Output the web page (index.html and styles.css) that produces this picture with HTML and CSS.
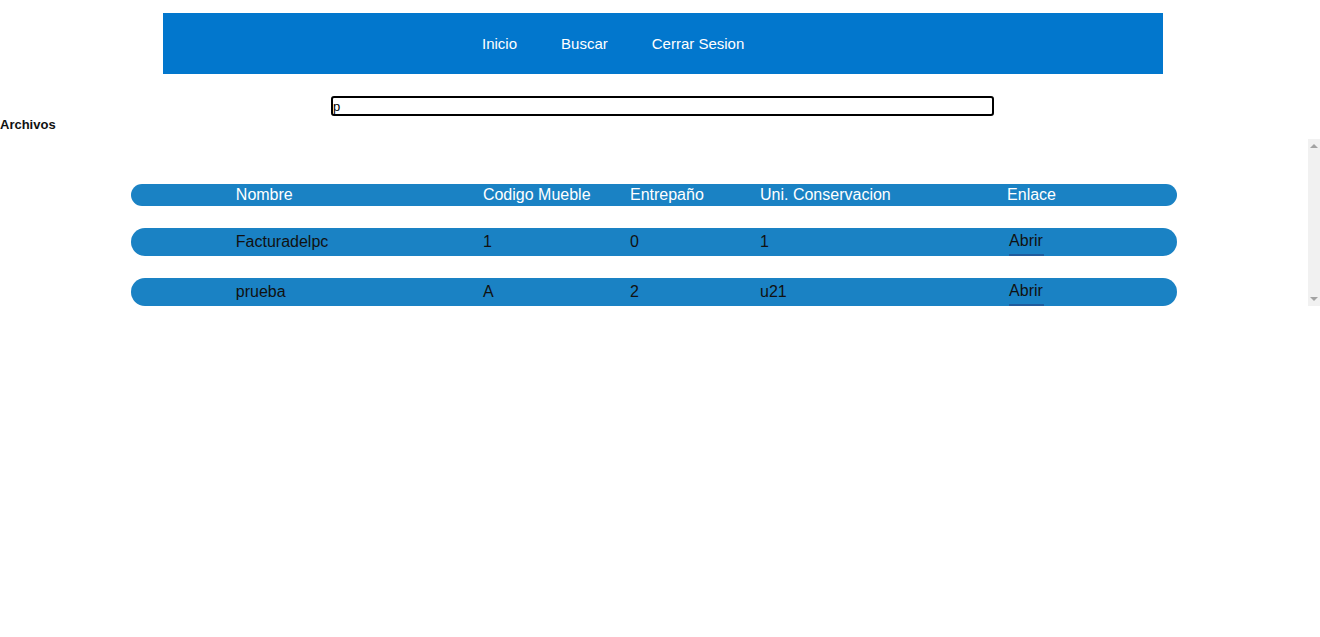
FILE: index.html
```html
<!DOCTYPE html>
<html lang="es">
<head>
<meta charset="utf-8">
<title>Archivos</title>
<link rel="stylesheet" href="styles.css">
</head>
<body>
<nav class="topnav">
  <a class="navlink" href="#">Inicio</a>
  <a class="navlink" href="#">Buscar</a>
  <a class="navlink" href="#">Cerrar Sesion</a>
</nav>
<div class="searchrow">
  <input class="search" type="text" value="p">
</div>
<h4 class="title">Archivos</h4>
<div class="scrollbox">
  <div class="scrollcontent">
    <table class="files">
      <colgroup>
        <col class="c0"><col class="c1"><col class="c2"><col class="c3"><col class="c4"><col class="c5">
      </colgroup>
      <thead>
        <tr><th></th><th>Nombre</th><th>Codigo Mueble</th><th>Entrepaño</th><th>Uni. Conservacion</th><th>Enlace</th></tr>
      </thead>
      <tbody>
        <tr><td></td><td>Facturadelpc</td><td>1</td><td>0</td><td>1</td><td><a class="abrir" href="#">Abrir</a></td></tr>
        <tr><td></td><td>prueba</td><td>A</td><td>2</td><td>u21</td><td><a class="abrir" href="#">Abrir</a></td></tr>
      </tbody>
    </table>
  </div>
  <div class="fakebar" aria-hidden="true">
    <svg class="arrow" width="12" height="14" viewBox="0 0 12 14"><polygon points="2,9 10,9 6,5" fill="#a3a3a3"/></svg>
    <svg class="arrow" width="12" height="14" viewBox="0 0 12 14"><polygon points="2,5 10,5 6,9" fill="#a3a3a3"/></svg>
  </div>
</div>
</body>
</html>
```
FILE: styles.css
```css
html, body {
  margin: 0;
  padding: 0;
  background: #fff;
  font-family: "Liberation Sans", Arial, sans-serif;
}
.topnav {
  width: 1000px;
  height: 61px;
  margin: 13px 0 0 163px;
  background: #0277cd;
  display: flex;
  align-items: center;
  padding-left: 319px;
  box-sizing: border-box;
  gap: 44px;
}
.navlink {
  color: #fff;
  text-decoration: none;
  font-size: 15px;
}
.searchrow {
  margin-top: 22px;
  padding-left: 331px;
  height: 20px;
}
.search {
  display: block;
  box-sizing: border-box;
  width: 663px;
  height: 20px;
  border: 2px solid #000;
  border-radius: 3px;
  padding: 0;
  font-family: "Liberation Sans", Arial, sans-serif;
  font-size: 13px;
  color: #000;
  outline: none;
}
.title {
  margin: 0;
  padding-top: 1px;
  height: 22px;
  font-size: 13px;
  font-weight: bold;
  color: #111;
  line-height: 15px;
}
.scrollbox {
  height: 167px;
  display: flex;
}
.scrollcontent {
  flex: 1;
  overflow: hidden;
}
.fakebar {
  width: 12px;
  background: #f1f1f1;
  display: flex;
  flex-direction: column;
  justify-content: space-between;
}
.arrow { display: block; }
.files {
  width: 80%;
  margin: 23px auto 0;
  table-layout: fixed;
  border-collapse: separate;
  border-spacing: 0 22px;
  font-size: 16px;
}
.c0 { width: 105px; }
.c1 { width: 247px; }
.c2 { width: 147px; }
.c3 { width: 130px; }
.c4 { width: 247px; }
.c5 { width: 170px; }
.files th, .files td {
  background: #1a82c4;
  text-align: left;
  padding: 0;
  white-space: nowrap;
}
.files th {
  color: #fff;
  font-weight: normal;
  padding: 2px 0;
}
.files td {
  color: #111;
}
.files th:first-child, .files td:first-child {
  border-radius: 20px 0 0 20px;
}
.files th:last-child, .files td:last-child {
  border-radius: 0 20px 20px 0;
}
.abrir {
  display: inline-block;
  margin-left: 2px;
  padding: 4px 1px 4px 0;
  color: #111;
  text-decoration: none;
  border-bottom: 2px solid #1f5c9e;
}
```
